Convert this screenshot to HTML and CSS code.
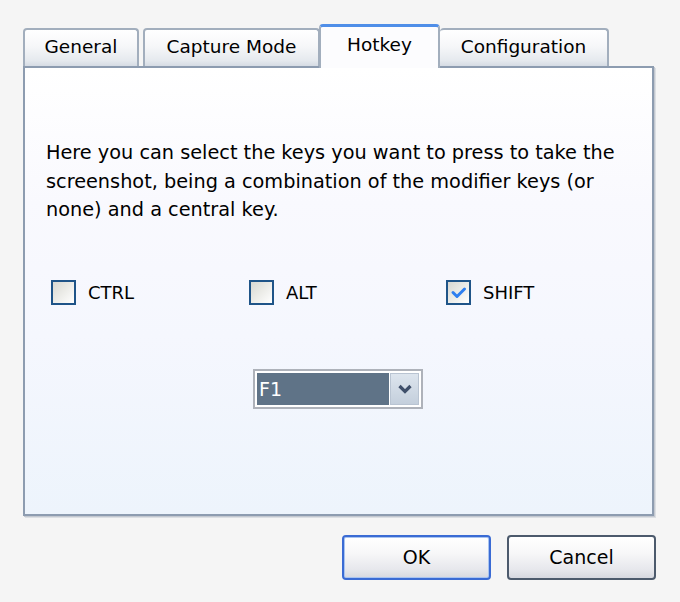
FILE: index.html
```html
<!DOCTYPE html>
<html>
<head>
<meta charset="utf-8">
<link rel="stylesheet" href="styles.css">
</head>
<body>
<div class="dialog">
  <div class="tabs">
    <div class="tab tab-general">General</div>
    <div class="tab tab-capture">Capture Mode</div>
    <div class="tab tab-hotkey active">Hotkey</div>
    <div class="tab tab-config">Configuration</div>
  </div>
  <div class="panel">
    <p class="desc">Here you can select the keys you want to press to take the screenshot, being a combination of the modifier keys (or none) and a central key.</p>
    <div class="mods">
      <label class="check c-ctrl"><span class="box"></span>CTRL</label>
      <label class="check c-alt"><span class="box"></span>ALT</label>
      <label class="check c-shift"><span class="box checked"><svg width="17" height="15" viewBox="0 0 17 15"><path d="M3 7.5 L7 11.5 L14.5 4" fill="none" stroke="#2e7ff0" stroke-width="3" stroke-linecap="round" stroke-linejoin="round"/></svg></span>SHIFT</label>
    </div>
    <div class="combo-row">
      <div class="combo">
        <div class="combo-value">F1</div>
        <div class="combo-btn"><svg width="16" height="12" viewBox="0 0 16 12"><path d="M2.5 3 L8 8.5 L13.5 3" fill="none" stroke="#3f4f6a" stroke-width="3.2"/></svg></div>
      </div>
    </div>
  </div>
  <div class="buttons">
    <div class="btn btn-ok">OK</div>
    <div class="btn btn-cancel">Cancel</div>
  </div>
</div>
</body>
</html>
```
FILE: styles.css
```css
html, body {
  margin: 0;
  padding: 0;
  background: #f5f5f5;
}
body {
  font-family: "DejaVu Sans", Verdana, sans-serif;
  font-size: 18.5px;
  color: #000;
}
.dialog {
  padding: 22px 0 0 23px;
  width: 633px;
}
.tabs {
  display: flex;
  align-items: flex-end;
  height: 44px;
  position: relative;
  z-index: 2;
}
.tab {
  box-sizing: border-box;
  height: 38px;
  border: 2px solid #a2aebd;
  border-bottom: none;
  border-radius: 4px 4px 0 0;
  background: linear-gradient(#ffffff 0%, #f6f7f9 45%, #e5e9ee 85%, #d6dce4 100%);
  text-align: center;
  line-height: 34px;
  font-size: 18.5px;
}
.tab-general { width: 116px; margin-right: 4px; }
.tab-capture { width: 177px; }
.tab-hotkey { width: 120px; }
.tab-config { width: 169px; border-left: none; }
.tab.active {
  height: 44px;
  background: #fcfcfe;
  border: 2px solid #a2aebd;
  border-top: 3px solid #4f8ee8;
  border-bottom: none;
  line-height: 36px;
  margin-left: -1px;
  margin-right: 0;
  margin-bottom: -2px;
  width: 121px;
  border-radius: 4px 4px 0 0;
}
.panel {
  box-sizing: border-box;
  width: 631px;
  height: 450px;
  border: 2px solid #8d9cb0;
  box-shadow: 1px 1px 0 #c3c8d0, 2px 2px 0 #dcdfe3;
  background: linear-gradient(#ffffff 0%, #f9f9fe 30%, #f5f7fe 60%, #edf4fc 100%);
  padding: 71px 10px 0 21px;
  position: relative;
  z-index: 1;
}
.desc {
  margin: 0;
  line-height: 28.5px;
  font-size: 19.3px;
  max-width: 585px;
}
.mods {
  display: flex;
  margin-top: 55px;
  margin-left: 5px;
  height: 26px;
  align-items: center;
}
.check {
  display: flex;
  align-items: center;
  gap: 12px;
  font-size: 18px;
}
.c-ctrl { width: 198px; }
.c-alt { width: 197px; }
.box {
  box-sizing: border-box;
  width: 25px;
  height: 25px;
  border: 2px solid #1f5488;
  background: linear-gradient(135deg, #d8d8d2 0%, #ecece8 50%, #ffffff 100%);
  display: flex;
  align-items: center;
  justify-content: center;
}
.combo-row {
  display: flex;
  margin-top: 63px;
  padding-left: 207px;
}
.combo {
  box-sizing: border-box;
  width: 170px;
  height: 40px;
  border: 2px solid #aeb2ba;
  background: #fff;
  padding: 2px;
  display: flex;
}
.combo-value {
  flex: 1;
  background: #5f7387;
  color: #fff;
  font-size: 19px;
  line-height: 32px;
  padding-left: 2px;
  margin-right: 1px;
}
.combo-btn {
  width: 29px;
  background: linear-gradient(#dde5ee, #c4cfdc);
  border: 1px solid #b9c4d2;
  box-sizing: border-box;
  display: flex;
  align-items: center;
  justify-content: center;
}
.buttons {
  display: flex;
  justify-content: flex-end;
  gap: 16px;
  margin-top: 19px;
}
.btn {
  box-sizing: border-box;
  width: 149px;
  height: 45px;
  border-radius: 4px;
  background: linear-gradient(#ffffff 0%, #f7f7f8 40%, #e6e7ec 80%, #d6d8df 100%);
  text-align: center;
  line-height: 41px;
  font-size: 19px;
}
.btn-ok {
  border: 2px solid #3a6bd4;
  box-shadow: inset 0 0 0 1px #a9c4f0;
}
.btn-cancel {
  border: 2px solid #4c5a6c;
}
```
